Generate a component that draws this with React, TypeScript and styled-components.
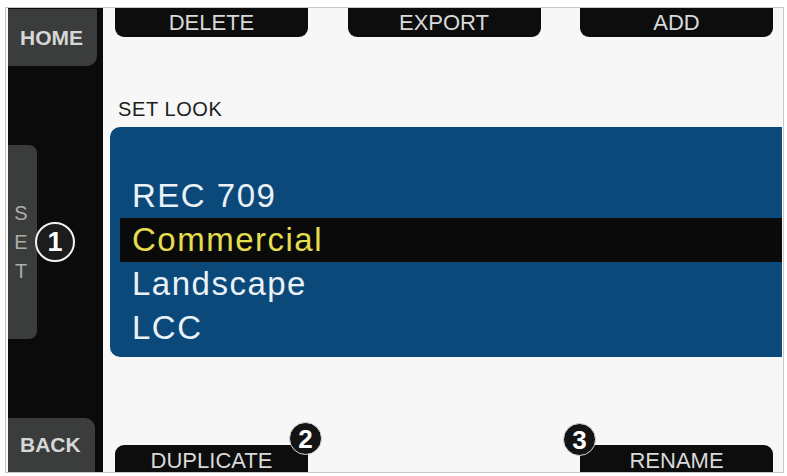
import styled, { createGlobalStyle } from "styled-components";

const GlobalStyle = createGlobalStyle`
  html, body {
    margin: 0;
    background: #ffffff;
  }
  body {
    font-family: "Liberation Sans", Arial, sans-serif;
  }
`;

const topButtons = ["DELETE", "EXPORT", "ADD"];
const looks = ["REC 709", "Commercial", "Landscape", "LCC"];
const activeLook = 1;

const App = () => {
  return (
    <>
      <GlobalStyle />
      <Frame>
        <Screen>
          <Sidebar>
            <SideButton $corner="bottom">HOME</SideButton>
            <SetTab>
              <span>S</span>
              <span>E</span>
              <span>T</span>
              <Callout $variant="ring" style={{ left: 27, top: "50%", marginTop: -20 }}>
                1
              </Callout>
            </SetTab>
            <SideButton $corner="top">BACK</SideButton>
          </Sidebar>

          <Main>
            <TabRow>
              {topButtons.map((label) => (
                <Tab key={label} $edge="top">
                  {label}
                </Tab>
              ))}
            </TabRow>

            <Label>SET LOOK</Label>
            <LookPanel>
              {looks.map((look, i) => (
                <LookRow key={look} $active={i === activeLook}>
                  {look}
                </LookRow>
              ))}
            </LookPanel>

            <BottomRow>
              <Tab $edge="bottom">
                DUPLICATE
                <Callout $variant="solid" style={{ right: -14, top: -23 }}>
                  2
                </Callout>
              </Tab>
              <span />
              <Tab $edge="bottom">
                <Callout $variant="solid" style={{ left: -17, top: -22 }}>
                  3
                </Callout>
                RENAME
              </Tab>
            </BottomRow>
          </Main>
        </Screen>
      </Frame>
    </>
  );
};

export default App;

const Frame = styled.div`
  box-sizing: border-box;
  width: 779px;
  height: 466px;
  margin: 7px 0 0 5px;
  padding: 0 1px 0 2px;
  border: 1px solid #c6c6c6;
  background: #fafafa;
`;

const Screen = styled.div`
  display: flex;
  height: 100%;
`;

const Sidebar = styled.div`
  width: 95px;
  display: flex;
  flex-direction: column;
  justify-content: space-between;
  align-items: flex-start;
  background: #0b0b0b;
`;

const SideButton = styled.div<{ $corner: "top" | "bottom" }>`
  box-sizing: border-box;
  width: ${(p) => (p.$corner === "bottom" ? "89px" : "87px")};
  height: ${(p) => (p.$corner === "bottom" ? "57px" : "54px")};
  margin-top: ${(p) => (p.$corner === "bottom" ? "1px" : "0")};
  padding-left: 12px;
  display: flex;
  align-items: center;
  background: #3b3d3c;
  border-radius: ${(p) => (p.$corner === "bottom" ? "0 0 10px 0" : "0 10px 0 0")};
  color: #d6d8d7;
  font-size: 21px;
  font-weight: 700;
`;

const SetTab = styled.div`
  position: relative;
  width: 29px;
  height: 194px;
  display: flex;
  flex-direction: column;
  justify-content: center;
  align-items: center;
  background: #3b3d3c;
  border-radius: 0 8px 8px 0;
  color: #a9aeab;
  font-size: 20px;
  line-height: 29px;
  padding-right: 3px;
  box-sizing: border-box;
`;

const Callout = styled.span<{ $variant: "ring" | "solid" }>`
  position: absolute;
  box-sizing: border-box;
  width: ${(p) => (p.$variant === "ring" ? "40px" : "33px")};
  height: ${(p) => (p.$variant === "ring" ? "40px" : "33px")};
  display: flex;
  align-items: center;
  justify-content: center;
  border-radius: 50%;
  background: ${(p) => (p.$variant === "ring" ? "#1c1c1c" : "#141414")};
  border: ${(p) => (p.$variant === "ring" ? "2px solid #f2f2f2" : "1.5px solid #d8d8d8")};
  color: #ffffff;
  font-family: "Liberation Sans", Arial, sans-serif;
  font-size: ${(p) => (p.$variant === "ring" ? "27px" : "26px")};
  font-weight: 700;
  line-height: 1;
`;

const Main = styled.div`
  flex: 1;
  display: flex;
  flex-direction: column;
  background: #f7f7f7;
`;

const TabRow = styled.div`
  display: grid;
  grid-template-columns: repeat(3, 193px);
  justify-content: space-between;
  padding: 0 9px 0 12px;
`;

const BottomRow = styled(TabRow)`
  margin-top: auto;
`;

const Tab = styled.div<{ $edge: "top" | "bottom" }>`
  position: relative;
  box-sizing: border-box;
  height: ${(p) => (p.$edge === "top" ? "29px" : "27px")};
  padding-top: ${(p) => (p.$edge === "top" ? "0" : "2px")};
  line-height: ${(p) => (p.$edge === "top" ? "29px" : "27px")};
  text-align: center;
  background: #0d0d0d;
  border-radius: ${(p) => (p.$edge === "top" ? "0 0 9px 9px" : "9px 9px 0 0")};
  color: #d9d9d9;
  font-size: 22px;
`;

const Label = styled.div`
  margin: 60px 0 0 15px;
  font-size: 20px;
  line-height: 24px;
  letter-spacing: 0.6px;
  color: #1d1d1d;
`;

const LookPanel = styled.div`
  box-sizing: border-box;
  height: 230px;
  margin: 6px 0 0 7px;
  padding-top: 47px;
  background: #0b497b;
  border-radius: 10px 0 0 10px;
`;

const LookRow = styled.div<{ $active: boolean }>`
  height: 44px;
  margin-left: 10px;
  padding-left: 12px;
  line-height: 44px;
  font-size: 33px;
  letter-spacing: 1.5px;
  color: ${(p) => (p.$active ? "#e4dd4c" : "#eaf2f8")};
  background: ${(p) => (p.$active ? "#0a0a0a" : "transparent")};
`;
